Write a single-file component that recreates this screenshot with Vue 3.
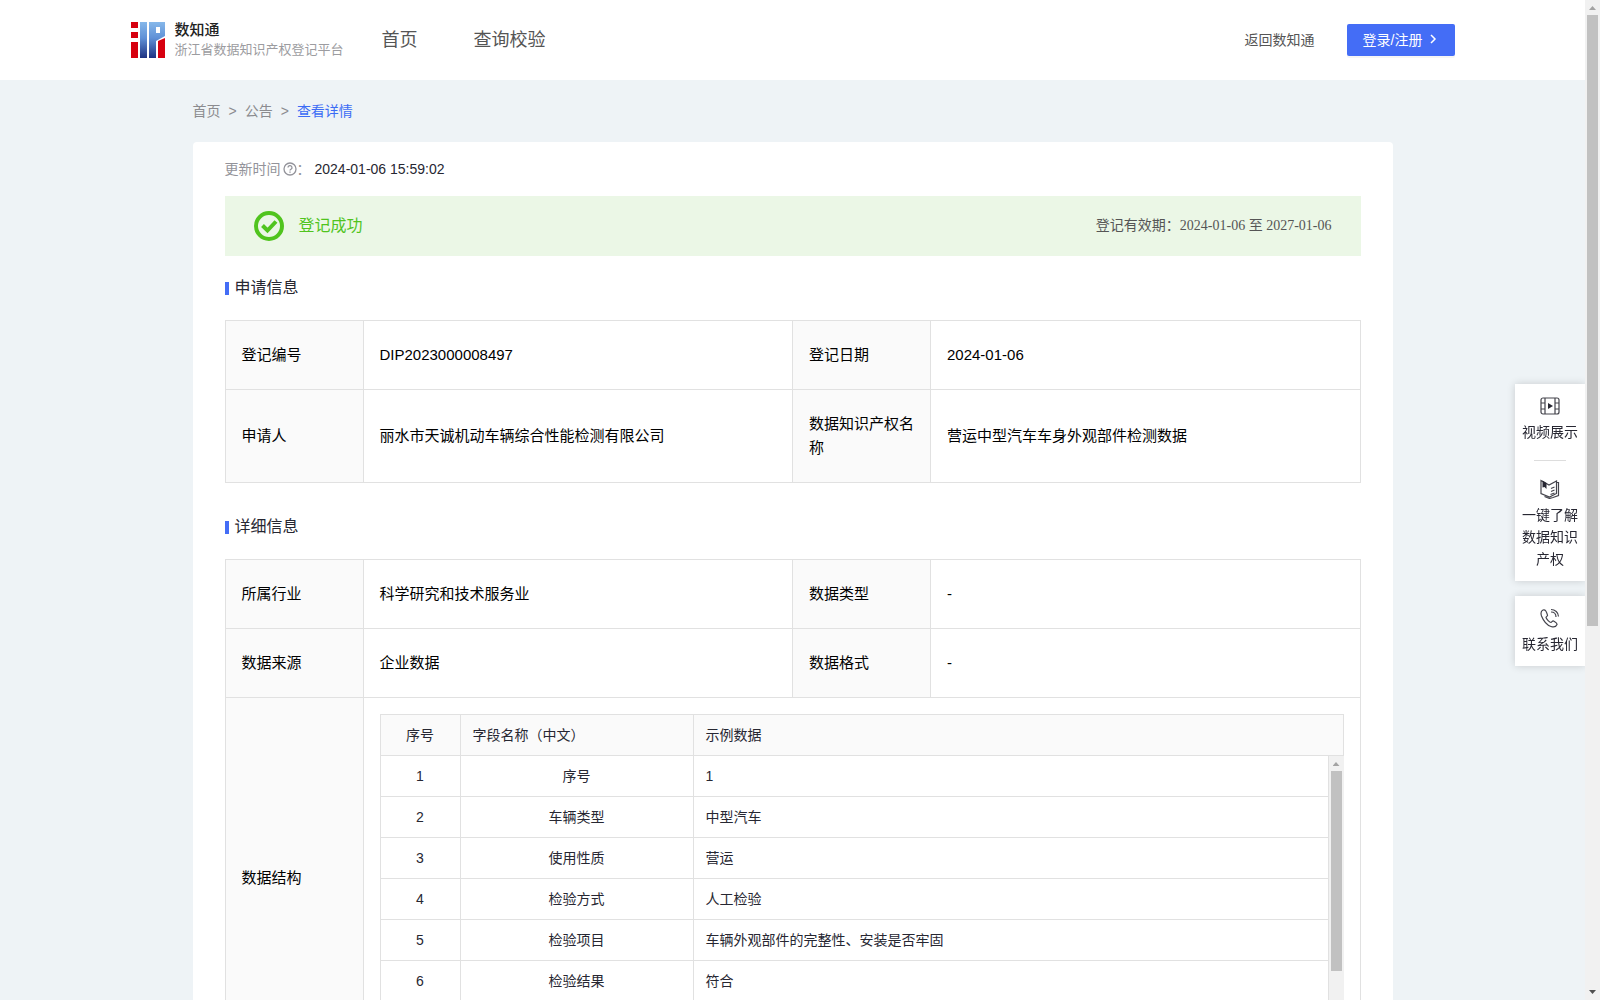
<template>
  <div class="page">
    <div class="scroller">
      <header class="header">
        <div class="header-inner">
          <a class="brand" href="#">
            <svg class="logo" viewBox="0 0 34 36" aria-hidden="true">
              <defs>
                <linearGradient id="logo-blue" x1="0" y1="0" x2="0" y2="1">
                  <stop offset="0" stop-color="#86b8ea" />
                  <stop offset="0.45" stop-color="#5f90d6" />
                  <stop offset="1" stop-color="#1e3282" />
                </linearGradient>
              </defs>
              <path fill="#d7000f" d="M0 0h7v6H0zM0 10h7v6H0zM0 20h7v16H0zM27 19l7-3v20h-7z" />
              <path fill="url(#logo-blue)" fill-rule="evenodd" d="M9 0h7v36H9zM18 0h16v14l-9 5v17h-7zM25 5v6h4V5z" />
            </svg>
            <span class="brand-text">
              <strong>数知通</strong>
              <span>浙江省数据知识产权登记平台</span>
            </span>
          </a>
          <nav class="nav">
            <a href="#">首页</a>
            <a href="#">查询校验</a>
          </nav>
          <a class="back-link" href="#">返回数知通</a>
          <button class="login-btn" type="button">
            登录/注册
            <svg viewBox="0 0 8 10" aria-hidden="true"><path d="M2 1l4 4-4 4" /></svg>
          </button>
        </div>
      </header>

      <main class="main">
        <nav class="crumbs">
          <a href="#">首页</a>
          <span>&gt;</span>
          <a href="#">公告</a>
          <span>&gt;</span>
          <a class="active" href="#">查看详情</a>
        </nav>

        <section class="card">
          <div class="update">
            <span>更新时间</span>
            <svg class="help" viewBox="0 0 14 14" aria-hidden="true">
              <circle cx="7" cy="7" r="6" />
              <path d="M5 5.6a2 2 0 1 1 3 1.7c-.7.4-1 .7-1 1.3M7 9.6v1.2" />
            </svg>
            <span>：</span>
            <time>2024-01-06 15:59:02</time>
          </div>

          <div class="banner">
            <svg class="check" viewBox="0 0 30 30" aria-hidden="true">
              <circle cx="15" cy="15" r="13" />
              <path d="M8.500 14.500l5 5 8.500-9" />
            </svg>
            <span class="banner-title">登记成功</span>
            <span class="banner-date">登记有效期：2024-01-06 至 2027-01-06</span>
          </div>

          <h2 class="title">申请信息</h2>
          <table class="info">
            <tbody>
              <tr v-for="row in applyRows" :key="row[0]">
                <th>{{ row[0] }}</th>
                <td>{{ row[1] }}</td>
                <th>{{ row[2] }}</th>
                <td>{{ row[3] }}</td>
              </tr>
            </tbody>
          </table>

          <h2 class="title title-next">详细信息</h2>
          <table class="info">
            <tbody>
              <tr v-for="row in detailRows" :key="row[0]">
                <th>{{ row[0] }}</th>
                <td>{{ row[1] }}</td>
                <th>{{ row[2] }}</th>
                <td>{{ row[3] }}</td>
              </tr>
              <tr>
                <th>数据结构</th>
                <td class="nested" colspan="3">
                  <table class="fields">
                    <thead>
                      <tr>
                        <th class="col-no">序号</th>
                        <th class="col-name">字段名称（中文）</th>
                        <th>示例数据</th>
                      </tr>
                    </thead>
                  </table>
                  <div class="fields-body">
                    <div class="fields-scroller">
                      <table class="fields">
                        <tbody>
                          <tr v-for="(field, index) in fields" :key="field.name">
                            <td class="col-no">{{ index + 1 }}</td>
                            <td class="col-name">{{ field.name }}</td>
                            <td>{{ field.sample }}</td>
                          </tr>
                        </tbody>
                      </table>
                    </div>
                    <div class="scrollbar" aria-hidden="true">
                      <i class="arrow arrow-up"></i>
                      <div class="track"><div class="thumb" :style="{ height: fieldsThumb }"></div></div>
                      <i class="arrow arrow-down"></i>
                    </div>
                  </div>
                </td>
              </tr>
            </tbody>
          </table>
        </section>
      </main>
    </div>

    <div class="scrollbar" aria-hidden="true">
      <i class="arrow arrow-up"></i>
      <div class="track"><div class="thumb" :style="{ height: pageThumb }"></div></div>
      <i class="arrow arrow-down"></i>
    </div>

    <aside class="side">
      <div class="side-box">
        <a href="#">
          <svg viewBox="0 0 20 20" aria-hidden="true">
            <rect x="1" y="2" width="18" height="16" rx="2" />
            <path d="M5 2v16M15 2v16M1 7h4M1 13h4M15 7h4M15 13h4" />
            <path class="solid" d="M8 7l5 3-5 3z" />
          </svg>
          视频展示
        </a>
        <hr />
        <a href="#">
          <svg viewBox="0 0 20 20" aria-hidden="true">
            <path d="M1 1.500l8 4.500 7.500-4v12.500L9.500 18 1 14.500zM16.500 3.500h2v13L13 18.500l-3.500 1-5-2M11 9.500l3.500-1.500M11 12.500l3.500-1.500M10.500 15.500l4-1.500" />
            <path class="solid" d="M2.500 1.500l4 2.500v6L4.500 8l-2 .5z" />
          </svg>
          一键了解数据知识产权
        </a>
      </div>
      <div class="side-box">
        <a href="#">
          <svg viewBox="0 0 20 20" aria-hidden="true">
            <path d="M3 2C1 3 .5 5 1.500 8c2 5 5 9 9.500 10.500 3 1 5 .5 6-2 .5-1-.5-1.500-3.500-3.500-1-.5-1.500 1-2.500 1.500C9.500 14.500 6.500 11 6 9.500 6 8.500 8 8 7.500 7 6.500 4 5.500 1 3 2zM11 1.500c4 0 7.500 3 7.500 7M11 4c3 0 5 2 5 5" />
          </svg>
          联系我们
        </a>
      </div>
    </aside>
  </div>
</template>

<script setup>
import { ref } from 'vue';

const applyRows = ref([
  ['登记编号', 'DIP2023000008497', '登记日期', '2024-01-06'],
  ['申请人', '丽水市天诚机动车辆综合性能检测有限公司', '数据知识产权名称', '营运中型汽车车身外观部件检测数据'],
]);

const detailRows = ref([
  ['所属行业', '科学研究和技术服务业', '数据类型', '-'],
  ['数据来源', '企业数据', '数据格式', '-'],
]);

const fields = ref([
  { name: '序号', sample: '1' },
  { name: '车辆类型', sample: '中型汽车' },
  { name: '使用性质', sample: '营运' },
  { name: '检验方式', sample: '人工检验' },
  { name: '检验项目', sample: '车辆外观部件的完整性、安装是否牢固' },
  { name: '检验结果', sample: '符合' },
]);

// share of the track that each thumb takes
const fieldsThumb = ref('78%');
const pageThumb = ref('63%');
</script>

<style>
body {
  background: #eef3f6;
}
</style>

<style scoped>
.page {
  display: flex;
  height: 100vh;
  overflow: hidden;
  font-family: 'Liberation Sans', 'Noto Sans CJK SC', sans-serif;
  font-size: 14px;
  line-height: 22px;
  color: #272732;
}

.scroller {
  flex: 1;
  overflow-y: auto;
  scrollbar-width: none;
}

a {
  color: inherit;
  text-decoration: none;
}

.header {
  background: #fff;
}

.header-inner {
  display: flex;
  align-items: center;
  max-width: 1324px;
  height: 80px;
  margin: 0 auto;
}

.brand {
  display: flex;
  align-items: center;
  gap: 10px;
}

.logo {
  width: 34px;
  height: 36px;
}

.brand-text {
  display: flex;
  flex-direction: column;
  font-size: 13px;
  line-height: 20px;
  color: #9c9ca0;
}

.brand-text strong {
  font-size: 15px;
  font-weight: 500;
  color: #222;
}

.nav {
  display: flex;
  flex: 1;
  gap: 56px;
  margin-left: 38px;
  font-size: 18px;
  color: #555;
}

.back-link {
  color: #555;
}

.login-btn {
  display: flex;
  align-items: center;
  gap: 6px;
  height: 32px;
  margin-left: 32px;
  padding: 0 18px 2px 16px;
  border: none;
  border-radius: 2px;
  background: #446df6;
  box-shadow: 0 2px 0 rgba(0, 0, 0, 0.04);
  color: #fff;
  font-family: inherit;
  font-size: 14px;
  cursor: pointer;
}

.login-btn svg {
  width: 8px;
  height: 10px;
  fill: none;
  stroke: #fff;
  stroke-width: 1.5;
}

.main {
  max-width: 1200px;
  margin: 0 auto;
}

.crumbs {
  display: flex;
  gap: 8px;
  padding: 20px 0;
  color: #8b8b8f;
}

.crumbs .active {
  color: #3c6cf5;
}

.card {
  padding: 16px 32px 32px;
  border-radius: 4px;
  background: #fff;
}

.update {
  display: flex;
  align-items: center;
  margin-bottom: 16px;
  color: #93939a;
}

.update time {
  margin-left: 4px;
  color: #272732;
}

.help {
  width: 14px;
  height: 14px;
  margin-left: 2px;
  fill: none;
  stroke: #93939a;
  stroke-width: 1.3;
}

.banner {
  display: flex;
  align-items: center;
  height: 60px;
  padding: 0 29px;
  background: #ebf7e6;
}

.check {
  width: 30px;
  height: 30px;
  fill: none;
  stroke: #50c41e;
  stroke-width: 4;
}

.banner-title {
  flex: 1;
  margin-left: 15px;
  font-size: 16px;
  color: #50c41e;
}

.banner-date {
  font-family: 'Liberation Serif', 'Noto Sans CJK SC', serif;
  color: #555;
}

.title {
  display: flex;
  align-items: center;
  gap: 6px;
  margin: 20px 0;
  font-size: 16px;
  font-weight: 400;
  line-height: 24px;
}

.title::before {
  width: 4px;
  height: 13px;
  background: #446df6;
  content: '';
}

.title-next {
  margin-top: 32px;
}

.info {
  width: 100%;
  border-collapse: collapse;
  table-layout: fixed;
  font-size: 15px;
  line-height: 24px;
  color: #000;
}

.info th,
.info td {
  padding: 22px 16px;
  border: 1px solid #e1e1e1;
  font-weight: 400;
  text-align: left;
}

.info th {
  width: 105px;
  background: #fafafa;
}

.info .nested {
  padding: 16px;
}

.info .fields {
  width: 100%;
  border-collapse: collapse;
  table-layout: fixed;
  font-size: 14px;
  line-height: 22px;
  color: #272732;
}

.info .fields th,
.info .fields td {
  width: auto;
  padding: 9px 12px;
}

.info .fields .col-no {
  width: 55px;
  text-align: center;
}

.info .fields .col-name {
  width: 208px;
}

.info .fields td.col-name {
  text-align: center;
}

.fields-body {
  display: flex;
  height: 286px;
}

.fields-scroller {
  flex: 1;
  overflow: hidden;
}

.fields-body .fields tr:first-child td {
  border-top: none;
}

.scrollbar {
  display: flex;
  flex-direction: column;
  width: 15px;
  background: #f1f1f1;
}

.track {
  flex: 1;
  padding: 0 2px;
}

.thumb {
  background: #c1c1c1;
}

.arrow {
  height: 4px;
  margin: 6px 4px 5px;
  background: #a3a3a3;
  clip-path: polygon(50% 0, 100% 100%, 0 100%);
}

.arrow-down {
  margin: 5px 4px 6px;
  background: #505050;
  clip-path: polygon(0 0, 100% 0, 50% 100%);
}

.side {
  position: fixed;
  top: 384px;
  right: 15px;
  display: flex;
  flex-direction: column;
  gap: 15px;
  width: 70px;
  clip-path: inset(-10px 0 -10px -10px);
}

.side-box {
  padding: 12px 7px 11px;
  background: #fff;
  box-shadow: 0 0 8px rgba(0, 0, 0, 0.16);
  text-align: center;
}

.side-box a {
  display: flex;
  flex-direction: column;
  align-items: center;
  gap: 5px;
}

.side-box hr {
  width: 32px;
  margin: 17px auto 18px;
  border: none;
  border-top: 1px solid #ddd;
}

.side-box svg {
  width: 20px;
  height: 20px;
  fill: none;
  stroke: #44444c;
  stroke-width: 1.2;
}

.side-box .solid {
  fill: #272732;
  stroke: none;
}
</style>
